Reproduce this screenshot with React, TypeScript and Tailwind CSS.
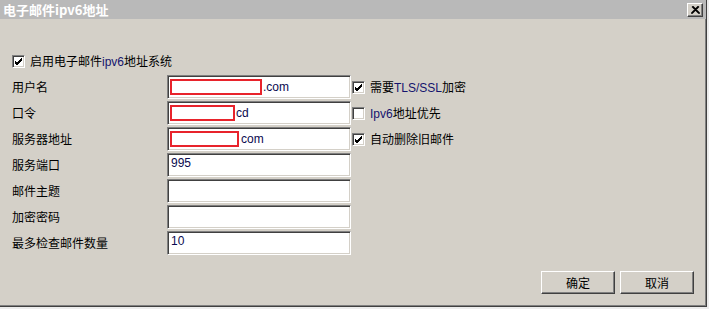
const cjk = "font-['Noto_Sans_CJK_SC',sans-serif]";
const latin = "font-['Liberation_Sans','Noto_Sans_CJK_SC',sans-serif]";

function Check({ checked }: { checked: boolean }) {
  return (
    <div className="w-[13px] h-[13px] shrink-0 bg-white border border-t-[#808080] border-l-[#808080] border-b-white border-r-white shadow-[inset_1px_1px_0_#404040,inset_-1px_-1px_0_#d4d0c8] flex items-center justify-center">
      {checked && (
        <svg width="9" height="9" viewBox="0 0 9 9">
          <path d="M1 4 L3 6 L8 1 M1 5 L3 7 L8 2 M1 6 L3 8 L8 3" stroke="#000" strokeWidth="1" fill="none" />
        </svg>
      )}
    </div>
  );
}

function Field({ children }: { children?: React.ReactNode }) {
  return (
    <div className="w-[184px] h-[24px] shrink-0 bg-white border border-t-[#808080] border-l-[#808080] border-b-white border-r-white shadow-[inset_1px_1px_0_#404040,inset_-1px_-1px_0_#d4d0c8] flex items-start pl-[2px] pt-[2px]">
      {children}
    </div>
  );
}

function Masked({ w, tail, gap }: { w: number; tail: string; gap: string }) {
  return (
    <div className="flex items-center h-[17px]">
      <div className="h-[16px] border-2 border-[#e8232b] shrink-0" style={{ width: w }} />
      <span className={`${latin} text-[12px] leading-none text-[#0a0a50] ${gap}`}>{tail}</span>
    </div>
  );
}

function Button({ label }: { label: string }) {
  return (
    <button className="w-[74px] h-[23px] bg-[#d4d0c8] border border-t-white border-l-white border-b-[#404040] border-r-[#404040] shadow-[inset_-1px_-1px_0_#808080] text-[12px] text-black">
      {label}
    </button>
  );
}

const rows: { label: string; field: React.ReactNode; side?: { checked: boolean; text: React.ReactNode } }[] = [
  {
    label: '用户名',
    field: <Masked w={92} tail=".com" gap="ml-[1px]" />,
    side: { checked: true, text: <>需要<span className={`${latin} text-[#14146e]`}>TLS/SSL</span>加密</> },
  },
  {
    label: '口令',
    field: <Masked w={65} tail="cd" gap="ml-[1px]" />,
    side: { checked: false, text: <><span className={`${latin} text-[#14146e]`}>Ipv6</span>地址优先</> },
  },
  {
    label: '服务器地址',
    field: <Masked w={69} tail="com" gap="ml-[2px]" />,
    side: { checked: true, text: '自动删除旧邮件' },
  },
  { label: '服务端口', field: <span className={`${latin} text-[12px] leading-[14px] pl-[1px] text-[#0a0a50]`}>995</span> },
  { label: '邮件主题', field: null },
  { label: '加密密码', field: null },
  { label: '最多检查邮件数量', field: <span className={`${latin} text-[12px] leading-[14px] pl-[1px] text-[#0a0a50]`}>10</span> },
];

export default function App() {
  return (
    <div className={`w-[709px] h-[309px] bg-[#ececec] ${cjk}`}>
      <div className="w-[707px] h-[307px] bg-[#d4d0c8] border-r border-b border-[#404040] shadow-[inset_-1px_-1px_0_#808080] flex flex-col">
        <div className="h-[19px] bg-[#b9b9b9] flex items-center justify-between pl-[3px] pr-[3px]">
          <span className="text-[13px] font-bold text-white leading-none">电子邮件ipv6地址</span>
          <div className="w-[16px] h-[14px] bg-[#d4d0c8] border border-t-white border-l-white border-b-[#404040] border-r-[#404040] shadow-[inset_-1px_-1px_0_#808080] flex items-center justify-center">
            <svg width="9" height="8" viewBox="0 0 9 8">
              <path d="M1 0.5 L8 7.5 M8 0.5 L1 7.5 M2 0.5 L9 7.5 M7 0.5 L0 7.5" stroke="#000" strokeWidth="1.1" fill="none" />
            </svg>
          </div>
        </div>

        <div className="flex flex-col pl-[12px] pr-[12px] text-[12px] text-black">
          <div className="mt-[36px] h-[13px] flex items-center gap-[5px]">
            <Check checked />
            <span className="leading-none">
              启用电子邮件<span className={`${latin} text-[#14146e]`}>ipv6</span>地址系统
            </span>
          </div>

          <div className="mt-[7px] flex flex-col gap-[2px]">
            {rows.map((r) => (
              <div key={r.label} className="flex items-center h-[24px]">
                <span className="w-[155px] shrink-0 leading-none">{r.label}</span>
                <Field>{r.field}</Field>
                {r.side && (
                  <div className="flex items-center ml-[1px] gap-[5px]">
                    <Check checked={r.side.checked} />
                    <span className="leading-none">{r.side.text}</span>
                  </div>
                )}
              </div>
            ))}
          </div>

          <div className="mt-[16px] flex justify-end gap-[5px]">
            <Button label="确定" />
            <Button label="取消" />
          </div>
        </div>
      </div>
    </div>
  );
}
